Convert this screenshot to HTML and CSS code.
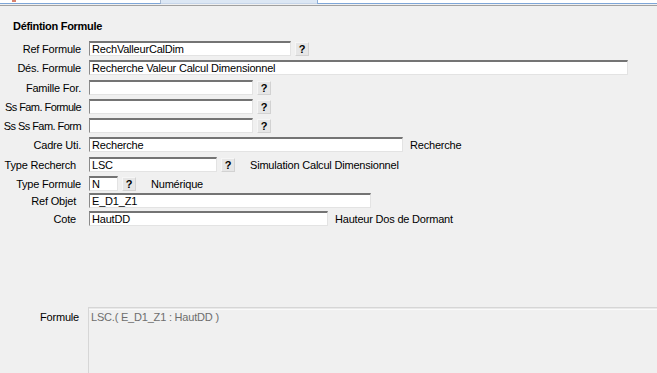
FILE: index.html
```html
<!DOCTYPE html>
<html lang="fr">
<head>
  <meta charset="UTF-8">
  <title>Définition Formule</title>
  <link rel="stylesheet" href="styles.css">
</head>
<body>
  <div class="tabs">
    <div class="tab first"><span class="tab-icon"></span></div>
    <div class="tab active"></div>
    <div class="tab last"></div>
  </div>
  <div class="rule"></div>

  <h1 class="title">Défintion Formule</h1>

  <div class="fields">
    <div class="row">
      <label class="lbl">Ref Formule</label>
      <input class="edit w-ref" type="text" value="RechValleurCalDim" readonly>
      <span class="help">?</span>
    </div>
    <div class="row">
      <label class="lbl">Dés. Formule</label>
      <input class="edit w-des" type="text" value="Recherche Valeur Calcul Dimensionnel" readonly>
    </div>
    <div class="row sp5">
      <label class="lbl">Famille For.</label>
      <input class="edit w-fam" type="text" value="" readonly>
      <span class="help">?</span>
    </div>
    <div class="row">
      <label class="lbl narrow">Ss Fam. Formule</label>
      <input class="edit w-fam" type="text" value="" readonly>
      <span class="help">?</span>
    </div>
    <div class="row">
      <label class="lbl narrow">Ss Ss Fam. Form</label>
      <input class="edit w-fam" type="text" value="" readonly>
      <span class="help">?</span>
    </div>
    <div class="row">
      <label class="lbl">Cadre Uti.</label>
      <input class="edit w-cadre" type="text" value="Recherche" readonly>
      <span class="note near">Recherche</span>
    </div>
    <div class="row sp5">
      <label class="lbl pad">Type Recherch</label>
      <input class="edit w-type" type="text" value="LSC" readonly>
      <span class="help">?</span>
      <span class="note">Simulation Calcul Dimensionnel</span>
    </div>
    <div class="row">
      <label class="lbl">Type Formule</label>
      <input class="edit w-n" type="text" value="N" readonly>
      <span class="help">?</span>
      <span class="note">Numérique</span>
    </div>
    <div class="row sp2">
      <label class="lbl pad">Ref Objet</label>
      <input class="edit w-obj" type="text" value="E_D1_Z1" readonly>
    </div>
    <div class="row sp3">
      <label class="lbl pad">Cote</label>
      <input class="edit w-cote" type="text" value="HautDD" readonly>
      <span class="note near">Hauteur Dos de Dormant</span>
    </div>
  </div>

  <div class="formula">
    <label class="lbl pad-s">Formule</label>
    <div class="formula-box">LSC.( E_D1_Z1 : HautDD )</div>
  </div>
</body>
</html>
```

FILE: styles.css
```css
html, body {
  height: 373px;
  overflow: hidden;
}
body {
  margin: 0;
  background: #f0f0f0;
  color: #000;
  font-family: "Liberation Sans", Arial, sans-serif;
  font-size: 11px;
  letter-spacing: -0.2px;
}

/* tab strip cut at the top of the window */
.tabs {
  display: flex;
  height: 4px;
}
.tab {
  box-sizing: border-box;
  height: 4px;
  background: #fff;
  border-bottom: 1px solid #7ea6d8;
}
.tab.first { width: 161px; border-right: 1px solid #a9b9cf; position: relative; }
.tab.active { width: 156px; background: #dce7f4; border-bottom-color: #c7d6ea; }
.tab.last { flex: 1; border-left: 1px solid #8fb0d8; }
.tab-icon {
  position: absolute;
  left: 12px;
  top: 0;
  width: 4px;
  height: 2px;
  background: #d9836f;
}
.rule {
  margin-top: 1px;
  height: 1px;
  background: #a0a0a0;
}

.title {
  margin: 14px 0 0 13px;
  font-size: 11px;
  line-height: 13px;
  font-weight: bold;
  letter-spacing: -0.3px;
}

.fields {
  margin-top: 8px;
  display: flex;
  flex-direction: column;
}
.row {
  display: flex;
  align-items: center;
  height: 15px;
  margin-top: 4px;
}
.row:first-child { margin-top: 0; }
.row.sp5 { margin-top: 5px; }
.row.sp3 { margin-top: 3px; }
.row.sp2 { margin-top: 2px; }

.lbl {
  box-sizing: border-box;
  width: 81px;
  flex: none;
  text-align: right;
  white-space: nowrap;
  margin-right: 8px;
}
.lbl.narrow { letter-spacing: -0.55px; }
.lbl.pad { padding-right: 5px; }
.lbl.pad-s { padding-right: 2px; }

.edit {
  box-sizing: border-box;
  height: 15px;
  margin: 0;
  padding: 0 0 0 2px;
  background: #fff;
  border-style: solid;
  border-width: 2px 1px 1px 1px;
  border-color: #747474 #e3e3e3 #e3e3e3 #8a8a8a;
  font-family: "Liberation Sans", Arial, sans-serif;
  font-size: 11px;
  letter-spacing: -0.2px;
  color: #000;
  outline: none;
}
.w-ref { width: 202px; }
.w-des { width: 539px; }
.w-fam { width: 164px; }
.w-cadre { width: 314px; }
.w-type { width: 128px; }
.w-n { width: 29px; }
.w-obj { width: 282px; }
.w-cote { width: 239px; }

.help {
  box-sizing: border-box;
  width: 14px;
  height: 14px;
  margin-left: 4px;
  background: #e6e6e6;
  border: 1px solid;
  border-color: #f6f6f6 #d2d2d2 #d2d2d2 #f6f6f6;
  font-weight: bold;
  font-size: 11px;
  line-height: 12px;
  text-align: center;
}

.note { margin-left: 15px; white-space: nowrap; }
.note.near { margin-left: 7px; }

.formula {
  display: flex;
  margin-top: 81px;
}
.formula .lbl {
  margin-right: 7px;
  padding-top: 4px;
}
.formula-box {
  flex: 1;
  height: 80px;
  margin-right: -10px;
  padding: 3px 0 0 2px;
  border-top: 1px solid #d6d6d6;
  border-left: 1px solid #d6d6d6;
  box-shadow: inset 0 1px 0 #e9e9e9, inset 0 2px 0 #fafafa;
  color: #6d6d6d;
}
```
